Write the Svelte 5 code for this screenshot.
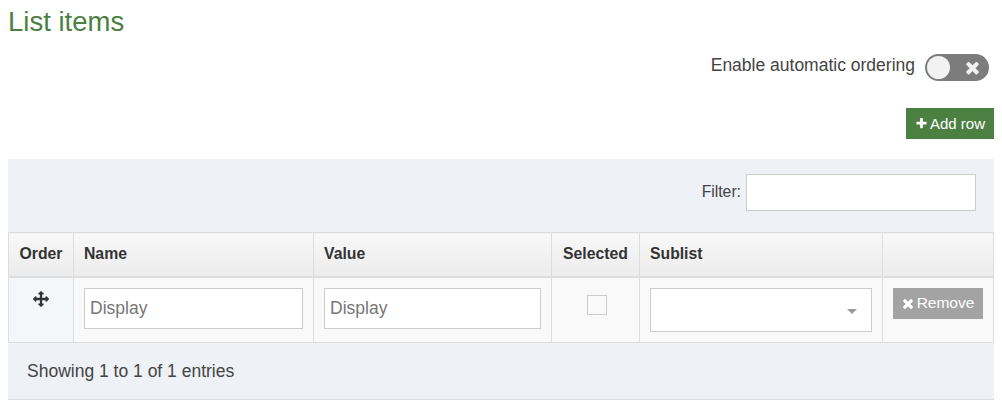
<script>
	const times =
		'M1298 1322q0 40-28 68l-136 136q-28 28-68 28t-68-28l-294-294-294 294q-28 28-68 28t-68-28l-136-136q-28-28-28-68t28-68l294-294-294-294q-28-28-28-68t28-68l136-136q28-28 68-28t68 28l294 294 294-294q28-28 68-28t68 28l136 136q28 28 28 68t-28 68l-294 294 294 294q28 28 28 68z';
	const plus =
		'M1600 736v192q0 40-28 68t-68 28h-416v416q0 40-28 68t-68 28h-192q-40 0-68-28t-28-68v-416h-416q-40 0-68-28t-28-68v-192q0-40 28-68t68-28h416v-416q0-40 28-68t68-28h192q40 0 68 28t28 68v416h416q40 0 68 28t28 68z';
	const arrows =
		'M1792 896q0 26-19 45l-256 256q-19 19-45 19t-45-19-19-45v-128h-384v384h128q26 0 45 19t19 45-19 45l-256 256q-19 19-45 19t-45-19l-256-256q-19-19-19-45t19-45 45-19h128v-384h-384v128q0 26-19 45t-45 19-45-19l-256-256q-19-19-19-45t19-45l256-256q19-19 45-19t45 19 19 45v128h384v-384h-128q-26 0-45-19t-19-45 19-45l256-256q19-19 45-19t45 19l256 256q19 19 19 45t-19 45-45 19h-128v384h384v-128q0-26 19-45t45-19 45 19l256 256q19 19 19 45z';
</script>

<div class="page">
	<h2>List items</h2>

	<div class="toggle_row">
		<span>Enable automatic ordering</span>
		<div class="toggle">
			<div class="knob"></div>
			<svg class="toggle_x" viewBox="0 0 1408 1792"><path d={times} /></svg>
		</div>
	</div>

	<div class="add_row">
		<button class="add">
			<svg viewBox="0 0 1792 1792"><path d={plus} /></svg>
			Add row
		</button>
	</div>

	<div class="panel">
		<div class="filter">
			<label for="filter">Filter:</label>
			<input id="filter" type="text" />
		</div>

		<table>
			<thead>
				<tr>
					<th class="order">Order</th>
					<th class="name">Name</th>
					<th class="value">Value</th>
					<th class="selected">Selected</th>
					<th class="sublist">Sublist</th>
					<th class="actions"></th>
				</tr>
			</thead>
			<tbody>
				<tr>
					<td class="order">
						<svg class="move" viewBox="0 0 1792 1792"><path d={arrows} /></svg>
					</td>
					<td><input class="cell_input" type="text" placeholder="Display" /></td>
					<td><input class="cell_input" type="text" placeholder="Display" /></td>
					<td class="selected"><div class="check"></div></td>
					<td>
						<div class="select"><div class="caret"></div></div>
					</td>
					<td>
						<button class="remove">
							<svg viewBox="0 0 1408 1792"><path d={times} /></svg>
							Remove
						</button>
					</td>
				</tr>
			</tbody>
		</table>

		<div class="info">Showing 1 to 1 of 1 entries</div>
	</div>
</div>

<style>
	:global(body) {
		font-family: 'Liberation Sans', Arial, sans-serif;
		font-size: 17.5px;
		color: #333;
		background: #fff;
	}

	.page {
		padding: 0 8px;
		height: 411px;
		box-sizing: border-box;
		overflow: hidden;
	}

	h2 {
		margin: 0;
		padding-top: 6px;
		font-size: 27.5px;
		line-height: 32px;
		font-weight: 400;
		color: #4c7f42;
	}

	.toggle_row {
		display: flex;
		justify-content: flex-end;
		align-items: center;
		gap: 10px;
		height: 27px;
		margin-top: 16px;
		padding-right: 5px;
		color: #444;
	}

	.toggle_row span {
		position: relative;
		top: -2px;
	}

	.toggle {
		position: relative;
		width: 64px;
		height: 27px;
		border-radius: 14px;
		background: #7c7c7c;
	}

	.knob {
		position: absolute;
		left: 2px;
		top: 2px;
		width: 23px;
		height: 23px;
		border-radius: 50%;
		background: #f2f2f2;
	}

	.toggle_x {
		position: absolute;
		right: 9px;
		top: 4px;
		width: 15px;
		height: 19px;
		fill: #f2f2f2;
	}

	.add_row {
		display: flex;
		justify-content: flex-end;
		margin-top: 27px;
	}

	button {
		display: flex;
		align-items: center;
		border: none;
		padding: 0;
		font-family: inherit;
		color: #fff;
	}

	.add {
		justify-content: center;
		gap: 2px;
		width: 88px;
		height: 31px;
		padding-bottom: 1px;
		background: #4c7f42;
		font-size: 15px;
	}

	.add svg {
		width: 13px;
		height: 13px;
		fill: #fff;
	}

	.panel {
		margin-top: 20px;
		background: #eef1f6;
		border-bottom: 1px solid #ddd;
	}

	.filter {
		display: flex;
		justify-content: flex-end;
		align-items: center;
		gap: 5px;
		height: 73px;
		padding-right: 18px;
		padding-bottom: 6px;
		box-sizing: border-box;
		font-size: 15.75px;
		color: #444;
	}

	.filter label {
		position: relative;
		top: -1px;
	}

	.filter input {
		width: 230px;
		height: 37px;
		box-sizing: border-box;
		border: 1px solid #ccc;
		background: #fff;
	}

	table {
		width: 100%;
		table-layout: fixed;
		border-collapse: collapse;
		background: #f9f9f9;
	}

	th {
		height: 44px;
		padding: 0 10px;
		box-sizing: border-box;
		border: 1px solid #ddd;
		border-bottom: 2px solid #ddd;
		background: linear-gradient(#f8f8f8, #ececec);
		font-size: 15.75px;
		text-align: left;
		color: #333;
	}

	th.order,
	th.selected {
		text-align: center;
		padding: 0;
	}

	th.order {
		width: 65px;
	}

	th.name {
		width: 240px;
	}

	th.value {
		width: 238px;
	}

	th.selected {
		width: 88px;
	}

	th.sublist {
		width: 243px;
	}

	td {
		height: 65px;
		padding: 10px;
		box-sizing: border-box;
		border: 1px solid #ddd;
		vertical-align: top;
	}

	td.order {
		background: #f3f7fa;
		padding: 0;
		text-align: center;
	}

	.move {
		display: block;
		width: 16px;
		height: 16px;
		margin: 13px auto 0;
		fill: #333;
	}

	.cell_input {
		display: block;
		width: 100%;
		height: 41px;
		box-sizing: border-box;
		border: 1px solid #ccc;
		padding: 0 5px;
		background: #fff;
		font-family: inherit;
		font-size: 17.5px;
	}

	.cell_input::placeholder {
		color: #777;
		opacity: 1;
	}

	td.selected {
		padding: 17px 0 0 2px;
	}

	.check {
		width: 20px;
		height: 20px;
		margin: 0 auto;
		box-sizing: border-box;
		border: 1px solid #ccc;
		background: #f9f9f9;
	}

	.select {
		position: relative;
		height: 44px;
		box-sizing: border-box;
		border: 1px solid #ccc;
		background: #fff;
	}

	.caret {
		position: absolute;
		right: 14px;
		top: 20px;
		border-top: 5px solid #999;
		border-left: 5px solid transparent;
		border-right: 5px solid transparent;
	}

	.remove {
		justify-content: center;
		gap: 3px;
		width: 90px;
		height: 31px;
		background: #a3a3a3;
		font-size: 15.5px;
	}

	.remove svg {
		width: 12px;
		height: 15px;
		fill: #fff;
	}

	.info {
		height: 56px;
		padding-left: 19px;
		line-height: 57px;
		color: #444;
	}
</style>
